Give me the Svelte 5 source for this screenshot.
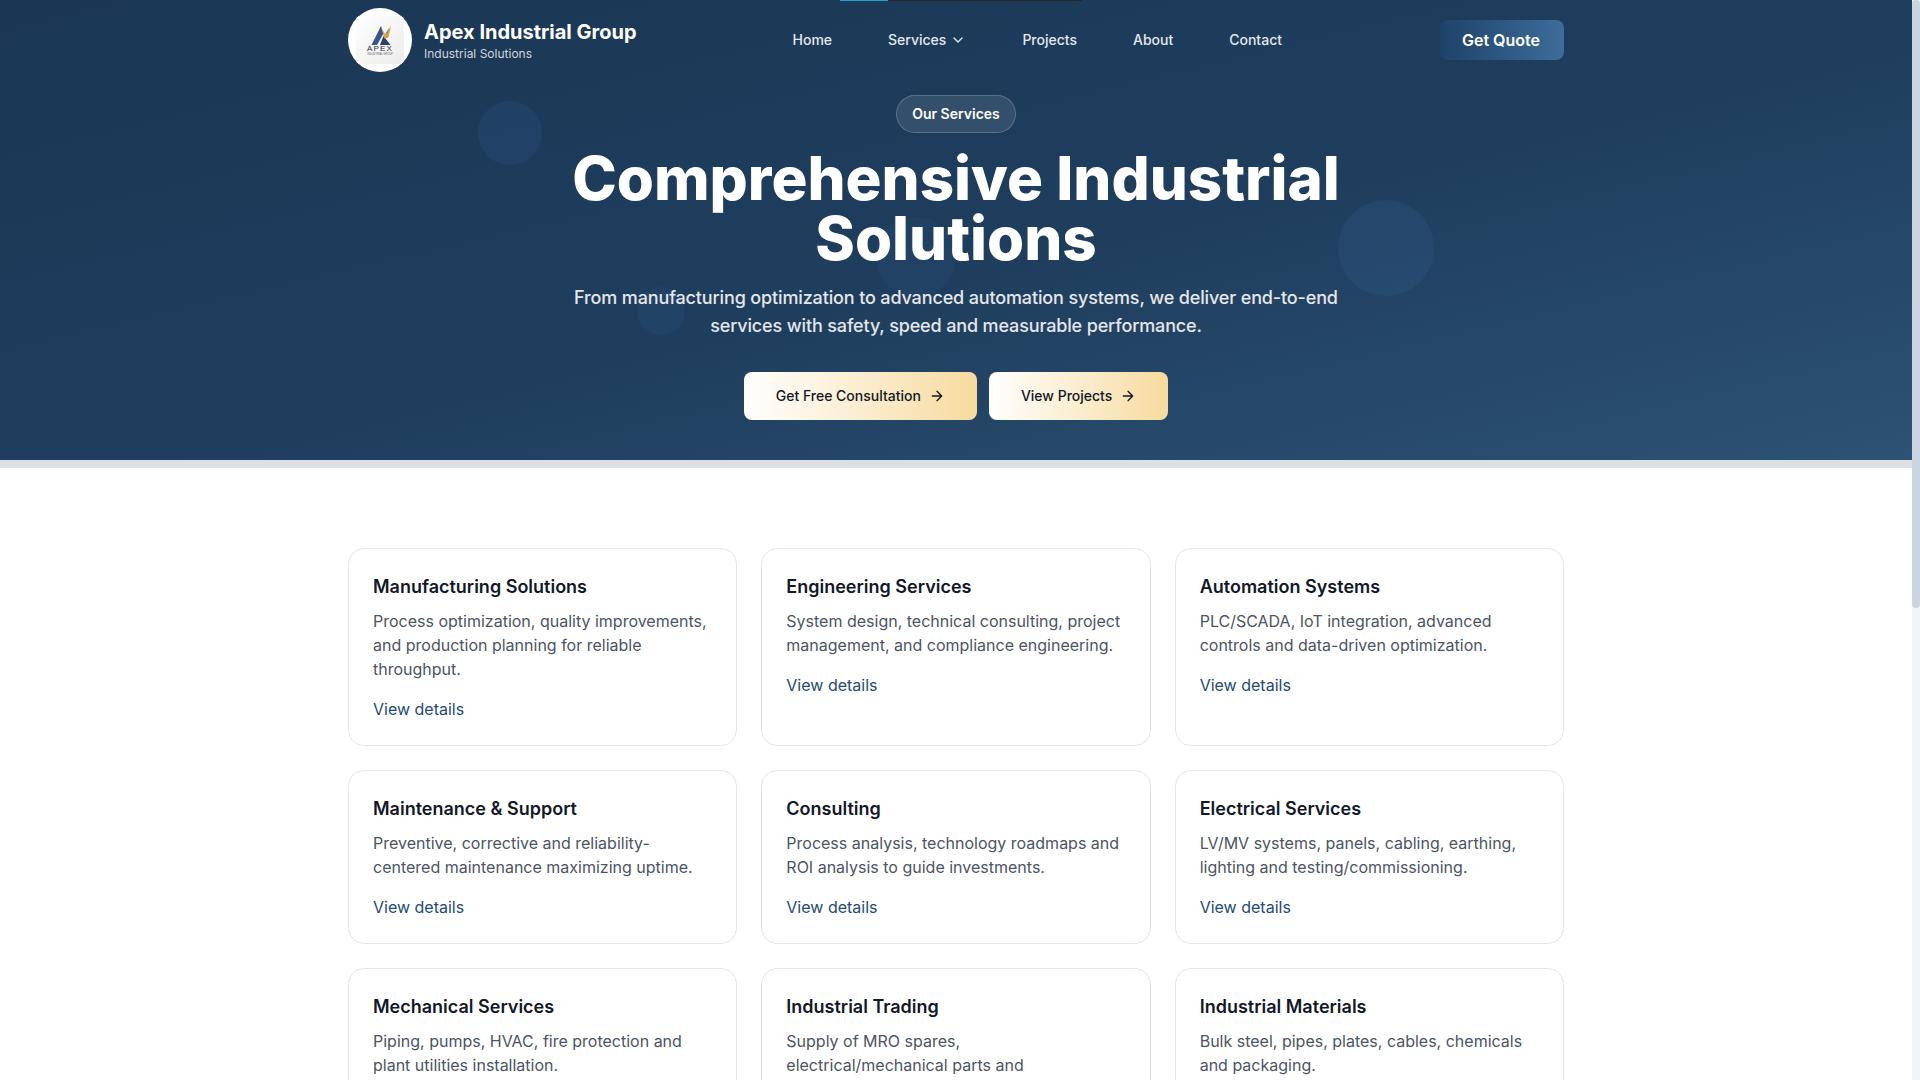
<script>
  const links = ['Home', 'Services', 'Projects', 'About', 'Contact'];
  const services = [
    ['Manufacturing Solutions', 'Process optimization, quality improvements, and production planning for reliable throughput.'],
    ['Engineering Services', 'System design, technical consulting, project management, and compliance engineering.'],
    ['Automation Systems', 'PLC/SCADA, IoT integration, advanced controls and data-driven optimization.'],
    ['Maintenance & Support', 'Preventive, corrective and reliability-centered maintenance maximizing uptime.'],
    ['Consulting', 'Process analysis, technology roadmaps and ROI analysis to guide investments.'],
    ['Electrical Services', 'LV/MV systems, panels, cabling, earthing, lighting and testing/commissioning.'],
    ['Mechanical Services', 'Piping, pumps, HVAC, fire protection and plant utilities installation.'],
    ['Industrial Trading', 'Supply of MRO spares, electrical/mechanical parts and consumables.'],
    ['Industrial Materials', 'Bulk steel, pipes, plates, cables, chemicals and packaging.']
  ];
</script>

<div class="page">
  <div class="top-bar"><span class="teal"></span><span class="dark"></span></div>

  <div class="hero-wrap">
    <span class="dot d1"></span>
    <span class="dot d2"></span>
    <span class="dot d3"></span>
    <span class="dot d4"></span>

    <header class="container nav">
      <a class="brand" href="#home">
        <span class="logo">
          <svg class="logo-img" viewBox="0 0 48 48" width="48" height="48" aria-hidden="true">
            <defs>
              <linearGradient id="lg" x1="0" y1="0" x2="1" y2="1">
                <stop offset="0" stop-color="#ffffff" />
                <stop offset="1" stop-color="#ececec" />
              </linearGradient>
            </defs>
            <rect width="48" height="48" fill="url(#lg)" />
            <path d="M15.5 29 L25 10 L27.5 17.5 L21 29 Z" fill="#34568f" />
            <path d="M24 29 L27.5 20 L34.5 29 Z" fill="#2b3f6b" />
            <path d="M25 11 L29 18 L35 10 L32.5 21.5 L28.5 22.5 Z" fill="#e0a03c" />
            <path d="M28.5 12 L30 16.5 L33.5 12 L31 19 Z" fill="#6f93c4" />
            <text x="24" y="35" text-anchor="middle" class="lg-a">APEX</text>
            <text x="24" y="38.6" text-anchor="middle" class="lg-b">INDUSTRIAL GROUP</text>
          </svg>
        </span>
        <span class="brand-text">
          <span class="brand-name">Apex Industrial Group</span>
          <span class="brand-sub">Industrial Solutions</span>
        </span>
      </a>

      <nav class="links">
        {#each links as l}
          <a class="link" href="#{l.toLowerCase()}">
            {l}
            {#if l === 'Services'}
              <svg viewBox="0 0 24 24" width="16" height="16" class="ico" aria-hidden="true"><path d="m6 9 6 6 6-6" /></svg>
            {/if}
          </a>
        {/each}
      </nav>

      <a class="quote" href="#quote">Get Quote</a>
    </header>

    <section class="hero">
      <span class="pill">Our Services</span>
      <h1>Comprehensive Industrial Solutions</h1>
      <p>From manufacturing optimization to advanced automation systems, we deliver end-to-end services with safety, speed and measurable performance.</p>
      <div class="actions">
        <a class="btn" href="#consult">Get Free Consultation
          <svg viewBox="0 0 24 24" width="16" height="16" class="ico" aria-hidden="true"><path d="M5 12h14M12 5l7 7-7 7" /></svg>
        </a>
        <a class="btn" href="#projects">View Projects
          <svg viewBox="0 0 24 24" width="16" height="16" class="ico" aria-hidden="true"><path d="M5 12h14M12 5l7 7-7 7" /></svg>
        </a>
      </div>
    </section>
  </div>

  <div class="band"></div>

  <main class="container grid">
    {#each services as [title, desc]}
      <article class="card">
        <h3>{title}</h3>
        <p>{desc}</p>
        <a href="#details">View details</a>
      </article>
    {/each}
  </main>

  <footer class="footer">
    <div class="container foot-inner">© Apex Industrial Group. All rights reserved.</div>
  </footer>

  <div class="scrollbar"><span class="thumb"></span></div>
</div>

<style>
  :global(body) {
    margin: 0;
    background: #fff;
    font-family: Inter, 'Liberation Sans', sans-serif;
  }
  a {
    text-decoration: none;
    color: inherit;
  }
  .page {
    position: relative;
    padding-right: 8px;
  }
  .scrollbar {
    position: fixed;
    top: 0;
    right: 0;
    width: 8px;
    height: 100vh;
    background: #f1f5f9;
    z-index: 5;
  }
  .thumb {
    display: block;
    height: 608px;
    border-radius: 4px;
    background: #cbd5e1;
  }
  .container {
    width: 1216px;
    margin: 0 auto;
  }
  .top-bar {
    position: absolute;
    top: 0;
    left: 840px;
    display: flex;
    height: 1px;
    z-index: 3;
  }
  .teal {
    width: 48px;
    background: #22a3cf;
  }
  .dark {
    width: 194px;
    background: #2a2728;
  }
  .hero-wrap {
    position: relative;
    background: linear-gradient(to bottom right, #1a3654 0%, #1f3e5e 55%, #2c5274 100%);
    height: 460px;
    overflow: hidden;
  }
  .dot {
    position: absolute;
    border-radius: 50%;
    background: rgba(70, 130, 200, 0.11);
  }
  .d1 { left: 478px; top: 101px; width: 64px; height: 64px; }
  .d2 { left: 637px; top: 287px; width: 48px; height: 48px; background: rgba(70, 130, 200, 0.08); }
  .d3 { left: 1338px; top: 200px; width: 96px; height: 96px; }
  .d4 { left: 876px; top: 217px; width: 80px; height: 80px; background: rgba(70, 130, 200, 0.06); }

  .nav {
    position: relative;
    height: 80px;
    display: flex;
    align-items: center;
    justify-content: space-between;
  }
  .brand {
    display: flex;
    align-items: center;
    gap: 12px;
  }
  .logo {
    width: 64px;
    height: 64px;
    border-radius: 50%;
    background: #fff;
    display: flex;
    align-items: center;
    justify-content: center;
    overflow: hidden;
  }
  .logo-img {
    display: block;
  }
  .lg-a {
    font: 8px 'Liberation Sans', sans-serif;
    letter-spacing: 1.2px;
    fill: #2a2a33;
  }
  .lg-b {
    font: 2.6px 'Liberation Sans', sans-serif;
    fill: #666;
  }
  .brand-text {
    display: flex;
    flex-direction: column;
  }
  .brand-name {
    font-size: 20px;
    line-height: 28px;
    font-weight: 700;
    color: #fff;
  }
  .brand-sub {
    font-size: 12px;
    line-height: 16px;
    color: #d1d5db;
  }
  .links {
    display: flex;
    gap: 56px;
    padding-right: 2px;
  }
  .link {
    display: flex;
    align-items: center;
    gap: 4px;
    font-size: 14px;
    line-height: 20px;
    font-weight: 500;
    color: #e5e7eb;
  }
  .ico {
    fill: none;
    stroke: currentColor;
    stroke-width: 2;
    stroke-linecap: round;
    stroke-linejoin: round;
  }
  .quote {
    box-sizing: border-box;
    width: 124px;
    height: 40px;
    padding-right: 2px;
    display: flex;
    align-items: center;
    justify-content: center;
    border-radius: 8px;
    font-size: 16px;
    font-weight: 600;
    color: #fff;
    background: linear-gradient(90deg, #1f4269, #3d6d9a);
  }

  .hero {
    position: relative;
    display: flex;
    flex-direction: column;
    align-items: center;
    padding-top: 15px;
    text-align: center;
  }
  .pill {
    box-sizing: border-box;
    width: 120px;
    height: 38px;
    padding: 8px 0;
    border-radius: 19px;
    border: 1px solid rgba(255, 255, 255, 0.2);
    background: rgba(255, 255, 255, 0.1);
    font-size: 14px;
    line-height: 20px;
    font-weight: 600;
    color: #fff;
  }
  h1 {
    margin: 15px 0 0;
    width: 896px;
    font-size: 60px;
    line-height: 60px;
    font-weight: 800;
    color: #fff;
  }
  .hero p {
    margin: 16px 0 0;
    width: 768px;
    font-size: 18px;
    line-height: 28px;
    font-weight: 500;
    letter-spacing: -0.14px;
    color: #e5e7eb;
  }
  .actions {
    display: flex;
    gap: 12px;
    margin-top: 32px;
  }
  .btn {
    height: 48px;
    padding: 0 32px;
    display: flex;
    align-items: center;
    gap: 8px;
    border-radius: 8px;
    font-size: 14px;
    line-height: 20px;
    font-weight: 500;
    color: #111827;
    background: linear-gradient(90deg, #ffffff, #f7db9f);
  }
  .band {
    height: 8px;
    background: #dcdfe4;
  }
  .grid {
    display: grid;
    grid-template-columns: repeat(3, 1fr);
    gap: 24px;
    padding: 80px 0;
  }
  .card {
    padding: 24px;
    border: 1px solid #e5e7eb;
    border-radius: 16px;
    background: #fff;
  }
  .card h3 {
    margin: 0;
    font-size: 18px;
    line-height: 28px;
    font-weight: 600;
    color: #111827;
  }
  .card p {
    margin: 8px 0 0;
    font-size: 16px;
    line-height: 24px;
    color: #4b5563;
  }
  .card a {
    display: inline-block;
    margin-top: 16px;
    font-size: 16px;
    line-height: 24px;
    color: #234b75;
  }
  .footer {
    height: 672px;
    background: #1a3654;
    color: #cbd5e1;
    font-size: 14px;
  }
  .foot-inner {
    padding-top: 48px;
  }
</style>
